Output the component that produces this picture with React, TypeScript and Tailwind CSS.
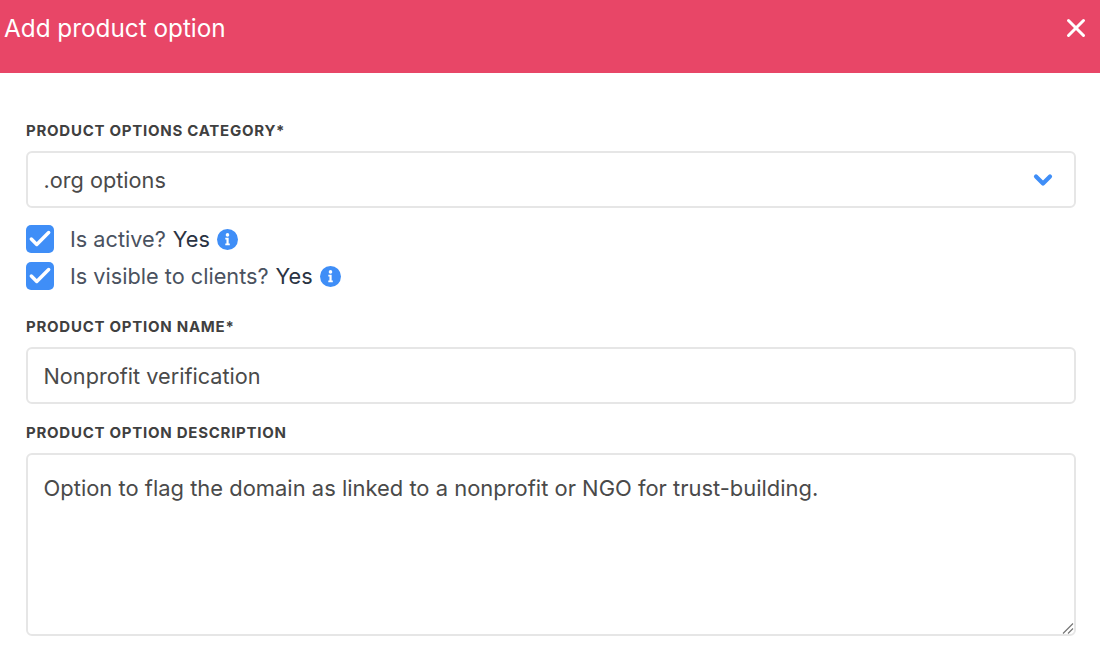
import React from "react";
import { X, ChevronDown, Check } from "lucide-react";

const InfoIcon = () => (
  <svg viewBox="0 0 20 20" className="h-[21px] w-[21px] shrink-0">
    <circle cx="10" cy="10" r="10" fill="#3f8ef7" />
    <circle cx="10" cy="5.6" r="1.7" fill="#fff" />
    <path d="M7.9 8.4h3.2v5.4h1.1v1.6H7.9v-1.6h1.1v-3.8H7.9z" fill="#fff" />
  </svg>
);

const Label: React.FC<{ children: React.ReactNode; className?: string }> = ({
  children,
  className,
}) => (
  <label
    className={`block text-[15px] leading-[20px] font-bold uppercase tracking-[0.74px] text-[#404040] ${className ?? ""}`}
  >
    {children}
  </label>
);

const CheckRow: React.FC<{ label: string }> = ({ label }) => (
  <div className="flex h-[28px] items-center">
    <span className="flex h-[28px] w-[28px] items-center justify-center rounded-[5px] bg-[#3f8ef7]">
      <Check size={26} strokeWidth={3.2} className="text-white" />
    </span>
    <span className="ml-[16px] pt-[1px] text-[21.7px] text-[#4a5260]">{label}</span>
    <span className="ml-[7px] pt-[1px] text-[21.7px] text-[#2a3342]">Yes</span>
    <span className="ml-[7px]">
      <InfoIcon />
    </span>
  </div>
);

export default function App() {
  return (
    <div className="h-[646px] w-[1100px] overflow-hidden bg-white font-['Inter',sans-serif]">
      <header className="flex h-[73px] items-start justify-between bg-[#e84667] pl-[4px] pr-[9px]">
        <h1 className="pt-[12px] text-[24.3px] leading-[32px] font-normal text-white">
          Add product option
        </h1>
        <button className="mt-[13px] text-white">
          <X size={30} strokeWidth={2.4} />
        </button>
      </header>

      <form className="px-[26px] pt-[48px]">
        <Label>Product options category*</Label>
        <div className="mt-[10px] flex h-[57px] w-[1050px] items-center justify-between rounded-[6px] border-2 border-[#e6e6e6] pl-[15.5px] pr-[17px]">
          <span className="pt-[1px] text-[21.7px] text-[#4a4a4a]">.org options</span>
          <ChevronDown size={28} strokeWidth={3.6} className="text-[#3f8ef7]" />
        </div>

        <div className="mt-[17px] flex flex-col gap-[9px]">
          <CheckRow label="Is active?" />
          <CheckRow label="Is visible to clients?" />
        </div>

        <Label className="mt-[27px]">Product option name*</Label>
        <input
          readOnly
          value="Nonprofit verification"
          className="mt-[10px] block h-[57px] w-[1050px] rounded-[6px] border-2 border-[#e6e6e6] px-[15.5px] text-[21.7px] text-[#4a4a4a] outline-none"
        />

        <Label className="mt-[19px]">Product option description</Label>
        <div className="relative mt-[10px] w-[1050px]">
          <textarea
            readOnly
            value="Option to flag the domain as linked to a nonprofit or NGO for trust-building."
            className="block h-[183px] w-full resize-none rounded-[6px] border-2 border-[#e6e6e6] px-[15.5px] py-[18px] text-[21.95px] leading-[30px] text-[#4a4a4a] outline-none"
          />
          <svg viewBox="0 0 12 12" className="absolute bottom-[2px] right-[2px] h-[12px] w-[12px]">
            <path d="M1 11.5 11 1.5M6 11.5l5-5" stroke="#777" strokeWidth="1.2" fill="none" />
          </svg>
        </div>
      </form>
    </div>
  );
}
